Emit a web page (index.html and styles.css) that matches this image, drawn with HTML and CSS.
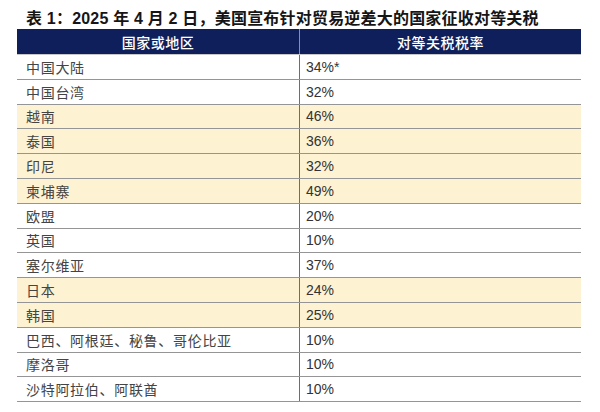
FILE: index.html
```html
<!DOCTYPE html>
<html lang="zh-CN">
<head>
<meta charset="utf-8">
<title>表1</title>
<link rel="stylesheet" href="styles.css">
</head>
<body>
<div class="page">
  <h1 class="title">表 1：2025 年 4 月 2 日，美国宣布针对贸易逆差大的国家征收对等关税</h1>
  <div class="tbl">
    <div class="row head"><div class="cell">国家或地区</div><div class="cell">对等关税税率</div></div>
    <div class="row"><div class="cell">中国大陆</div><div class="cell num">34%*</div></div>
    <div class="row"><div class="cell">中国台湾</div><div class="cell num">32%</div></div>
    <div class="row hl"><div class="cell">越南</div><div class="cell num">46%</div></div>
    <div class="row hl"><div class="cell">泰国</div><div class="cell num">36%</div></div>
    <div class="row hl"><div class="cell">印尼</div><div class="cell num">32%</div></div>
    <div class="row hl"><div class="cell">柬埔寨</div><div class="cell num">49%</div></div>
    <div class="row"><div class="cell">欧盟</div><div class="cell num">20%</div></div>
    <div class="row"><div class="cell">英国</div><div class="cell num">10%</div></div>
    <div class="row"><div class="cell">塞尔维亚</div><div class="cell num">37%</div></div>
    <div class="row hl"><div class="cell">日本</div><div class="cell num">24%</div></div>
    <div class="row hl"><div class="cell">韩国</div><div class="cell num">25%</div></div>
    <div class="row"><div class="cell">巴西、阿根廷、秘鲁、哥伦比亚</div><div class="cell num">10%</div></div>
    <div class="row"><div class="cell">摩洛哥</div><div class="cell num">10%</div></div>
    <div class="row"><div class="cell">沙特阿拉伯、阿联酋</div><div class="cell num">10%</div></div>
  </div>
</div>
</body>
</html>
```

FILE: styles.css
```css
html, body {
  margin: 0;
  padding: 0;
  background: #ffffff;
}

.page {
  padding: 9px 19px 0 17px;
  font-family: "Liberation Sans", "Noto Sans CJK SC", sans-serif;
}

.title {
  margin: 0 0 0 9px;
  height: 20px;
  line-height: 20px;
  font-size: 16px;
  font-weight: 700;
  letter-spacing: 0.2px;
  color: #151515;
  white-space: nowrap;
}

.tbl {
  width: 564px;
  display: flex;
  flex-direction: column;
}

.row {
  display: grid;
  grid-template-columns: 282px 282px;
  height: 24.8px;
  box-sizing: border-box;
  border-bottom: 1.5px solid #959595;
  background: #ffffff;
}

.row.hl {
  background: #fdf2d2;
}

.row.head {
  height: 26px;
  background: #0e1f5c;
  border-bottom: 1px solid #c8c8c8;
}

.cell {
  display: flex;
  align-items: center;
  padding-left: 9px;
  font-family: "Noto Sans CJK SC", sans-serif;
  font-size: 14px;
  letter-spacing: 0.7px;
  color: #444444;
  white-space: nowrap;
}

.cell + .cell {
  border-left: 1.5px solid #6e6e6e;
  padding-left: 6px;
}

.cell.num {
  font-family: "Liberation Sans", Arial, sans-serif;
  letter-spacing: 0;
  color: #333333;
}

.head .cell {
  justify-content: center;
  padding-left: 0;
  color: #ffffff;
  font-weight: 500;
  letter-spacing: 0.5px;
}

.head .cell + .cell {
  border-left-color: #8a8fa8;
}
```
